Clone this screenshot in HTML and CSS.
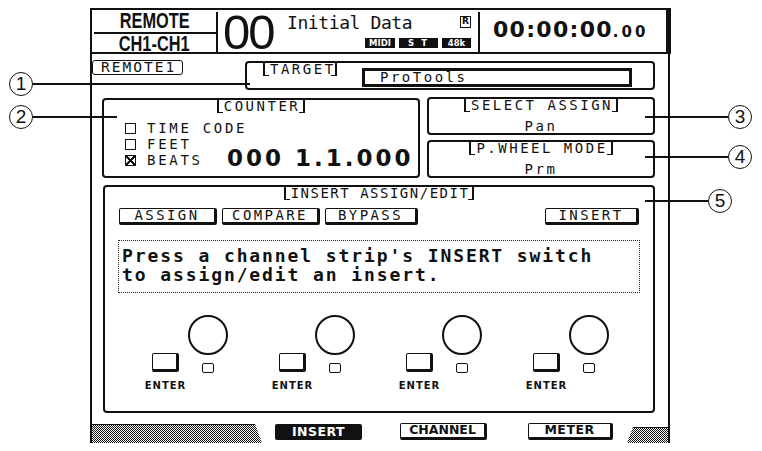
FILE: index.html
```html
<!DOCTYPE html>
<html lang="en">
<head>
    <meta charset="UTF-8">
    <meta name="viewport" content="width=device-width, initial-scale=1.0">
    <title>Remote 1 - Insert Assign/Edit</title>
    <link rel="stylesheet" href="styles.css">
</head>
<body>
<div class="page">

    <div class="lcd">
        <!-- top status bar -->
        <header class="lcd-head">
            <div class="mode">
                <div class="mode-name"><span>REMOTE</span></div>
                <div class="mode-ch"><span>CH1-CH1</span></div>
            </div>
            <div class="scene">
                <span class="scene-num">00</span>
                <div class="scene-info">
                    <div class="scene-title">Initial Data<span class="flag-r">R</span></div>
                    <div class="badges">
                        <span class="badge midi">MIDI</span>
                        <span class="badge st">S T</span>
                        <span class="badge rate">48k</span>
                    </div>
                </div>
            </div>
            <div class="clock">00:00:00<span class="clock-frac">.00</span></div>
        </header>

        <div class="lcd-body">
            <div class="row-top">
                <span class="page-tag">REMOTE1</span>
                <div class="group target">
                    <span class="tag">TARGET</span>
                    <div class="field">ProTools</div>
                </div>
            </div>

            <div class="row-mid">
                <div class="group counter">
                    <span class="tag">COUNTER</span>
                    <div class="counter-main">
                        <ul class="modes">
                            <li><span class="check"></span>TIME CODE</li>
                            <li><span class="check"></span>FEET</li>
                            <li><span class="check on"></span>BEATS</li>
                        </ul>
                        <div class="beats">000 1.1.000</div>
                    </div>
                </div>
                <div class="side">
                    <div class="group panel">
                        <span class="tag">SELECT ASSIGN</span>
                        <div class="value">Pan</div>
                    </div>
                    <div class="group panel">
                        <span class="tag">P.WHEEL MODE</span>
                        <div class="value">Prm</div>
                    </div>
                </div>
            </div>

            <div class="group insert">
                <span class="tag">INSERT ASSIGN/EDIT</span>
                <div class="buttons">
                    <span class="btn assign">ASSIGN</span>
                    <span class="btn compare">COMPARE</span>
                    <span class="btn bypass">BYPASS</span>
                    <span class="btn ins">INSERT</span>
                </div>
                <div class="message">Press a channel strip's INSERT switch<br>to assign/edit an insert.</div>
                <div class="knobs">
                    <div class="knob">
                        <div class="key-col"><span class="key"></span><span class="key-label">ENTER</span></div>
                        <div class="dial-col"><span class="dial"></span><span class="led"></span></div>
                    </div>
                    <div class="knob">
                        <div class="key-col"><span class="key"></span><span class="key-label">ENTER</span></div>
                        <div class="dial-col"><span class="dial"></span><span class="led"></span></div>
                    </div>
                    <div class="knob">
                        <div class="key-col"><span class="key"></span><span class="key-label">ENTER</span></div>
                        <div class="dial-col"><span class="dial"></span><span class="led"></span></div>
                    </div>
                    <div class="knob">
                        <div class="key-col"><span class="key"></span><span class="key-label">ENTER</span></div>
                        <div class="dial-col"><span class="dial"></span><span class="led"></span></div>
                    </div>
                </div>
            </div>
        </div>

        <!-- page tabs -->
        <nav class="tabs">
            <span class="hatch left"></span>
            <span class="tab active">INSERT</span>
            <span class="tab channel">CHANNEL</span>
            <span class="tab meter">METER</span>
            <span class="hatch right"></span>
        </nav>
    </div>

    <!-- numbered callouts -->
    <div class="callout c1"><span class="num">1</span><span class="lead"></span></div>
    <div class="callout c2"><span class="num">2</span><span class="lead"></span></div>
    <div class="callout c3"><span class="lead"></span><span class="num">3</span></div>
    <div class="callout c4"><span class="lead"></span><span class="num">4</span></div>
    <div class="callout c5"><span class="lead"></span><span class="num">5</span></div>

</div>
</body>
</html>
```

FILE: styles.css
```css
body {
    margin: 0;
    background-color: #ffffff;
    color: #111111;
    font-family: 'DejaVu Sans Mono', monospace;
    font-size: 14px;
}

.page {
    position: relative;
    width: 762px;
    height: 451px;
    overflow: hidden;
}

/* ---- LCD frame ---- */

.lcd {
    width: 580px;
    height: 435px;
    margin: 8px 0 0 90px;
    box-sizing: border-box;
    border-left: 2px solid #111;
    border-right: 2px solid #111;
    display: flex;
    flex-direction: column;
}

.lcd-head {
    display: flex;
    height: 46px;
    margin-right: -3px;
    box-sizing: border-box;
    border-top: 2px solid #111;
    border-bottom: 2px solid #111;
    border-right: 5px solid #111;
}

.mode {
    width: 124px;
    display: flex;
    flex-direction: column;
    font-family: 'Liberation Sans', sans-serif;
    font-weight: bold;
    font-size: 19px;
    text-align: center;
}

.mode span {
    display: inline-block;
    transform: scale(0.86, 1.18);
}

.mode-name {
    height: 24px;
    line-height: 22px;
    margin-left: 2px;
    box-sizing: border-box;
    border-bottom: 2px solid #111;
}

.mode-ch {
    height: 18px;
    line-height: 20px;
}

.scene {
    width: 262px;
    margin-top: 2px;
    padding: 0 7px 0 5px;
    box-sizing: border-box;
    border-left: 2px solid #111;
    display: flex;
}

.scene-num {
    font-family: 'Liberation Sans', sans-serif;
    font-size: 49px;
    line-height: 40px;
    letter-spacing: -2px;
}

.scene-info {
    width: 184px;
    margin-left: auto;
    padding-top: 1px;
}

.scene-title {
    display: flex;
    align-items: flex-start;
    font-size: 18px;
    line-height: 20px;
    letter-spacing: -0.4px;
}

.flag-r {
    margin: 3px 0 0 auto;
    width: 11px;
    height: 12px;
    box-sizing: border-box;
    border: 1.5px solid #111;
    font-family: 'DejaVu Sans', sans-serif;
    font-weight: bold;
    font-size: 9px;
    line-height: 9px;
    letter-spacing: 0;
    text-align: center;
}

.badges {
    display: flex;
    justify-content: flex-end;
    gap: 4px;
    margin-top: 5px;
}

.badge {
    height: 10px;
    background-color: #111;
    color: #fff;
    font-family: 'DejaVu Sans', sans-serif;
    font-weight: bold;
    font-size: 8.5px;
    line-height: 10px;
    text-align: center;
}

.badge.midi { width: 30px; }
.badge.st { width: 39px; letter-spacing: 2px; }
.badge.rate { width: 29px; }

.clock {
    flex: 1;
    margin-top: 2px;
    padding: 7px 0 0 13px;
    border-left: 2px solid #111;
    font-family: 'DejaVu Sans', sans-serif;
    font-weight: bold;
    font-size: 22px;
    line-height: 22px;
    letter-spacing: 1.3px;
    white-space: nowrap;
}

.clock-frac {
    font-size: 15px;
    letter-spacing: 3px;
}

/* ---- body ---- */

.lcd-body {
    display: flex;
    flex-direction: column;
}

.group {
    box-sizing: border-box;
    border: 2px solid #111;
    border-radius: 4px;
}

/* bracketed caption hanging from a box's top line */
.tag {
    display: inline-block;
    height: 13px;
    padding: 0 3px 0 5px;
    border-left: 2px solid #111;
    border-right: 2px solid #111;
    background:
        linear-gradient(#111, #111) left bottom / 4px 1.5px no-repeat,
        linear-gradient(#111, #111) right bottom / 4px 1.5px no-repeat;
    font-size: 14px;
    line-height: 13px;
    letter-spacing: 2.5px;
    white-space: nowrap;
}

.row-top {
    display: flex;
    align-items: flex-start;
}

.page-tag {
    width: 91px;
    height: 15px;
    margin-top: 6px;
    padding-left: 8px;
    box-sizing: border-box;
    border: 1.5px solid #111;
    border-radius: 3px;
    font-size: 14.5px;
    line-height: 13px;
    letter-spacing: 2px;
}

.target {
    width: 410px;
    height: 29px;
    margin: 7px 0 0 62px;
    padding-left: 16px;
    display: flex;
    align-items: flex-start;
}

.target .tag {
    width: 74px;
    box-sizing: border-box;
}

.field {
    width: 270px;
    height: 19px;
    margin: 5px 0 0 25px;
    padding-left: 15px;
    box-sizing: border-box;
    border: 3px solid #111;
    line-height: 13px;
    letter-spacing: 2.5px;
}

.row-mid {
    display: flex;
    align-items: flex-start;
    margin-top: 7px;
}

.counter {
    width: 318px;
    height: 80px;
    margin: 1px 0 0 10px;
    display: flex;
    flex-direction: column;
    align-items: center;
}

.counter-main {
    align-self: stretch;
    display: flex;
    align-items: flex-end;
    margin-top: 7px;
    padding-left: 21px;
}

.modes {
    list-style: none;
    margin: 0;
    padding: 0;
    width: 102px;
}

.modes li {
    display: flex;
    align-items: center;
    height: 16px;
    letter-spacing: 2.7px;
    white-space: nowrap;
}

.check {
    flex-shrink: 0;
    width: 11px;
    height: 11px;
    margin-right: 11px;
    box-sizing: border-box;
    border: 1.5px solid #111;
}

.check.on {
    background:
        linear-gradient(45deg, transparent 42%, #111 42%, #111 58%, transparent 58%),
        linear-gradient(-45deg, transparent 42%, #111 42%, #111 58%, transparent 58%);
}

.beats {
    font-family: 'DejaVu Sans', sans-serif;
    font-weight: bold;
    font-size: 23px;
    line-height: 24px;
    letter-spacing: 3px;
    white-space: pre;
    margin-bottom: -2px;
}

.side {
    width: 228px;
    margin-left: 7px;
    display: flex;
    flex-direction: column;
    gap: 5px;
}

.panel {
    height: 38px;
    display: flex;
    flex-direction: column;
    align-items: center;
}

.value {
    margin-top: 6px;
    line-height: 16px;
    letter-spacing: 2.5px;
}

/* ---- insert assign/edit ---- */

.insert {
    width: 552px;
    height: 228px;
    margin: 7px 0 0 11px;
    display: flex;
    flex-direction: column;
}

.insert .tag {
    align-self: center;
    letter-spacing: 1.5px;
}

.buttons {
    display: flex;
    gap: 5px;
    margin-top: 8px;
    padding: 0 14px;
}

.btn {
    height: 17px;
    box-sizing: border-box;
    border: 1.5px solid #111;
    border-right-width: 3px;
    border-bottom-width: 3px;
    border-radius: 2px;
    line-height: 13px;
    letter-spacing: 2.4px;
    text-align: center;
}

.btn.assign { width: 98px; }
.btn.compare { width: 98px; }
.btn.bypass { width: 93px; }
.btn.ins { width: 94px; margin-left: auto; }

.message {
    width: 522px;
    height: 53px;
    margin: 15px 0 0 13px;
    padding: 5px 0 0 3px;
    box-sizing: border-box;
    border: 1.5px dotted #222;
    font-weight: bold;
    font-size: 18px;
    line-height: 19px;
    letter-spacing: 1.9px;
    white-space: nowrap;
}

.knobs {
    display: flex;
    gap: 42px;
    margin-top: 22px;
    padding-left: 38px;
}

.knob {
    display: flex;
}

.key-col {
    width: 45px;
    padding-top: 38px;
    display: flex;
    flex-direction: column;
    align-items: center;
}

.key {
    width: 27px;
    height: 19px;
    box-sizing: border-box;
    border: 1.5px solid #111;
    border-right-width: 3px;
    border-bottom-width: 3px;
    border-radius: 2px;
}

.key-label {
    margin-top: 9px;
    font-family: 'DejaVu Sans', sans-serif;
    font-weight: bold;
    font-size: 10px;
    line-height: 10px;
    letter-spacing: 1px;
}

.dial-col {
    width: 40px;
    display: flex;
    flex-direction: column;
    align-items: center;
}

.dial {
    width: 40px;
    height: 40px;
    box-sizing: border-box;
    border: 2px solid #111;
    border-radius: 50%;
}

.led {
    width: 12px;
    height: 10px;
    margin-top: 8px;
    box-sizing: border-box;
    border: 1.5px solid #111;
    border-radius: 2px;
}

/* ---- tabs ---- */

.tabs {
    display: flex;
    align-items: flex-start;
    height: 20px;
    margin: auto -2px 0;
}

.hatch {
    height: 19px;
    margin-top: 1px;
    box-sizing: border-box;
    background: repeating-conic-gradient(#111 0 25%, #fff 0 50%) 0 0 / 2px 2px;
}

.hatch.left {
    width: 172px;
    border-top: 1px solid #111;
    border-left: 2px solid #111;
    clip-path: polygon(0 0, calc(100% - 7px) 0, 100% 100%, 0 100%);
}

.hatch.right {
    width: 43px;
    height: 16px;
    margin: 4px 0 0 auto;
    border-top: 1px solid #111;
    border-right: 2px solid #111;
    clip-path: polygon(6px 0, 100% 0, 100% 100%, 0 100%);
}

.tab {
    width: 87px;
    height: 17px;
    box-sizing: border-box;
    border: 1.5px solid #111;
    border-right-width: 3px;
    border-bottom-width: 3px;
    border-radius: 2px;
    font-family: 'DejaVu Sans', sans-serif;
    font-weight: bold;
    font-size: 12.5px;
    line-height: 12px;
    text-align: center;
}

.tab.active {
    margin-left: 13px;
    border-width: 0;
    height: 16px;
    margin-top: 1px;
    line-height: 16px;
    background-color: #111;
    color: #fff;
    letter-spacing: 0.5px;
}

.tab.channel { margin-left: 38px; }
.tab.meter { margin-left: 41px; width: 85px; letter-spacing: 0.5px; }

/* ---- callouts ---- */

.callout {
    position: absolute;
    display: flex;
    align-items: center;
}

.num {
    width: 24px;
    height: 24px;
    box-sizing: border-box;
    border: 1.5px solid #111;
    border-radius: 50%;
    font-family: 'Liberation Sans', sans-serif;
    font-size: 19px;
    line-height: 21px;
    text-align: center;
}

.lead {
    height: 2px;
    background-color: #111;
}

.c1 { left: 9px; top: 72px; }
.c1 .lead { width: 217px; }

.c2 { left: 9px; top: 105px; }
.c2 .lead { width: 84px; }

.c3 { left: 645px; top: 105px; }
.c3 .lead { width: 83px; }

.c4 { left: 645px; top: 145px; }
.c4 .lead { width: 83px; }

.c5 { left: 645px; top: 189px; }
.c5 .lead { width: 63px; }
```
